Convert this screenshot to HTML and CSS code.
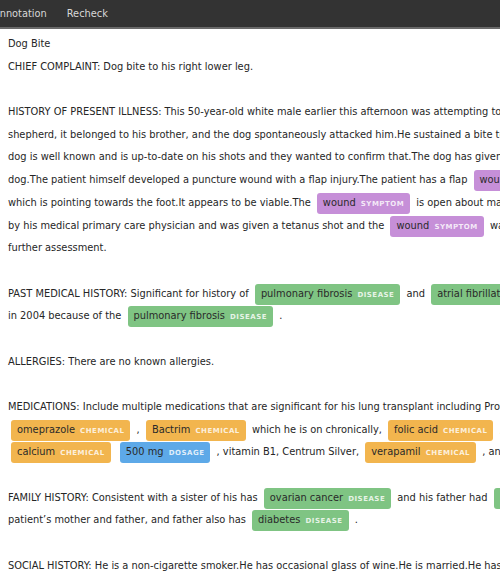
FILE: index.html
```html
<!DOCTYPE html>
<html>
<head>
<meta charset="utf-8">
<link rel="stylesheet" href="styles.css">
</head>
<body>
<div class="topbar">
  <nav class="nav">
    <span class="nav-item first">Annotation</span>
    <span class="nav-item">Recheck</span>
  </nav>
</div>
<main class="doc">
  <div class="line">Dog Bite</div>
  <div class="line">CHIEF COMPLAINT: Dog bite to his right lower leg.</div>
  <div class="line blank"></div>
  <div class="line">HISTORY OF PRESENT ILLNESS: This 50-year-old white male earlier this afternoon was attempting to adjust a cable that was attached to a dog. The dog was a German</div>
  <div class="line">shepherd, it belonged to his brother, and the dog spontaneously attacked him.He sustained a bite to the right lower leg. The</div>
  <div class="line">dog is well known and is up-to-date on his shots and they wanted to confirm that.The dog has given no problems before to the</div>
  <div class="line">dog.The patient himself developed a puncture wound with a flap injury.The patient has a flap <span class="chip symptom">wound <span class="tag">SYMPTOM</span></span> on the leg</div>
  <div class="line">which is pointing towards the foot.It appears to be viable.The <span class="chip symptom">wound <span class="tag">SYMPTOM</span></span> is open about maybe 1.5 cm. He was seen</div>
  <div class="line">by his medical primary care physician and was given a tetanus shot and the <span class="chip symptom">wound <span class="tag">SYMPTOM</span></span> was cleansed and referred here for</div>
  <div class="line">further assessment.</div>
  <div class="line blank"></div>
  <div class="line">PAST MEDICAL HISTORY: Significant for history of <span class="chip disease">pulmonary fibrosis <span class="tag">DISEASE</span></span> and <span class="chip disease">atrial fibrillation <span class="tag">DISEASE</span></span> . He had a lung transplant</div>
  <div class="line">in 2004 because of the <span class="chip disease">pulmonary fibrosis <span class="tag">DISEASE</span></span> .</div>
  <div class="line blank"></div>
  <div class="line">ALLERGIES: There are no known allergies.</div>
  <div class="line blank"></div>
  <div class="line">MEDICATIONS: Include multiple medications that are significant for his lung transplant including Prograf, CellCept, prednisone,</div>
  <div class="line"><span class="chip chemical">omeprazole <span class="tag">CHEMICAL</span></span> , <span class="chip chemical">Bactrim <span class="tag">CHEMICAL</span></span> which he is on chronically, <span class="chip chemical">folic acid <span class="tag">CHEMICAL</span></span> , <span class="chip chemical">vitamin D <span class="tag">CHEMICAL</span></span> ,</div>
  <div class="line"><span class="chip chemical">calcium <span class="tag">CHEMICAL</span></span> <span class="chip dosage">500 mg <span class="tag">DOSAGE</span></span> , vitamin B1, Centrum Silver, <span class="chip chemical">verapamil <span class="tag">CHEMICAL</span></span> , and Fosamax.</div>
  <div class="line blank"></div>
  <div class="line">FAMILY HISTORY: Consistent with a sister of his has <span class="chip disease">ovarian cancer <span class="tag">DISEASE</span></span> and his father had <span class="chip disease">liver cancer <span class="tag">DISEASE</span></span> .</div>
  <div class="line">patient’s mother and father, and father also has <span class="chip disease">diabetes <span class="tag">DISEASE</span></span> .</div>
  <div class="line blank"></div>
  <div class="line">SOCIAL HISTORY: He is a non-cigarette smoker.He has occasional glass of wine.He is married.He has children.</div>
</main>
</body>
</html>
```
FILE: styles.css
```css
html, body {
  margin: 0;
  padding: 0;
  background: #ffffff;
  overflow: hidden;
}
body {
  width: 500px;
  height: 580px;
  font-family: "DejaVu Sans", Verdana, sans-serif;
  color: #262626;
}
.topbar {
  height: 27px;
  background: #333333;
  border-bottom: 2px solid #6a6a6a;
  overflow: hidden;
}
.nav {
  display: flex;
  align-items: center;
  height: 27px;
  gap: 20px;
  margin-left: -7px;
  white-space: nowrap;
}
.nav-item {
  color: #d8d8d8;
  font-size: 9.8px;
}
.doc {
  padding: 4px 0 0 8px;
}
.line {
  white-space: nowrap;
  font-size: 9.85px;
  line-height: 22.7px;
  height: 22.7px;
}
.chip {
  display: inline-block;
  line-height: 20px;
  padding: 0 6px;
  margin: 0 3px;
  border-radius: 3px;
  color: #2a2a2a;
}
.tag {
  font-size: 7px;
  font-weight: bold;
  letter-spacing: 0.5px;
  color: rgba(255, 255, 255, 0.82);
  margin-left: 2px;
}
.symptom { background: #c68fd8; }
.disease { background: #7fc483; }
.chemical { background: #f2b54e; }
.dosage { background: #5da9e8; }
```
